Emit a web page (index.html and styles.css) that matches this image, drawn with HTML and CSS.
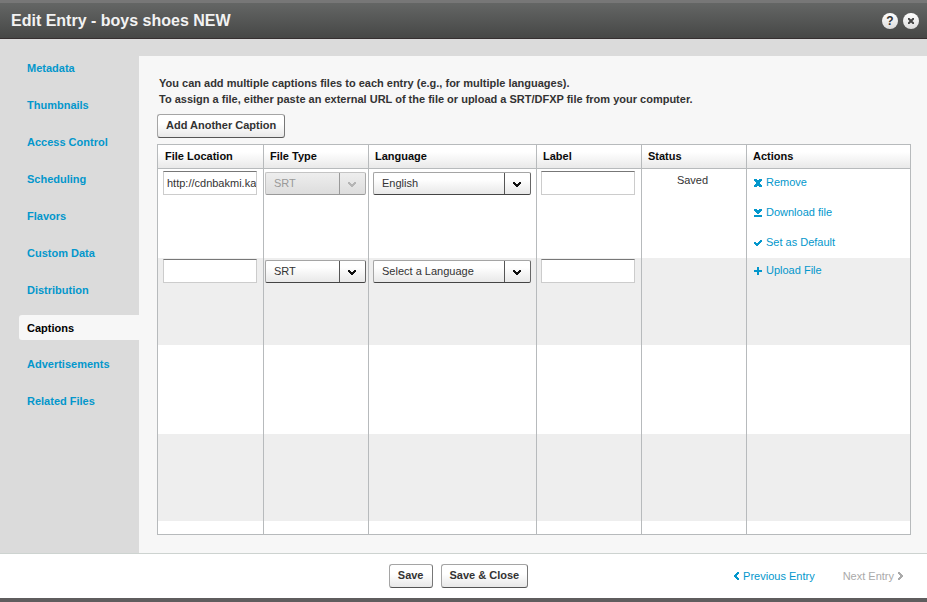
FILE: index.html
```html
<!DOCTYPE html>
<html lang="en">
<head>
<meta charset="utf-8">
<title>Edit Entry - boys shoes NEW</title>
<link rel="stylesheet" href="styles.css">
</head>
<body>
<svg class="defs" aria-hidden="true">
  <symbol id="chevron" viewBox="0 0 8 5"><path d="M0 0h2v1h1v1h2V1h1V0h2v2H7v1H6v1H5v1H3V4H2V3H1V2H0z"/></symbol>
  <symbol id="remove" viewBox="0 0 8 8"><path d="M0 0h3v1h2V0h3v2H7v1H6v2h1v1h1v2H5V7H3v1H0V6h1V5h1V3H1V2H0z"/></symbol>
  <symbol id="download" viewBox="0 0 8 8"><path d="M0 0h3v1h2V0h3v2H7v1H6v1H5v1H3V4H2V3H1V2H0zM0 6h8v2H0z"/></symbol>
  <symbol id="check" viewBox="0 0 8 8"><path d="M6 1h2v2H7v1H6v1H5v1H4v1H2V6H1V5H0V3h2v1h2V3h1V2h1z"/></symbol>
  <symbol id="plus" viewBox="0 0 8 8"><path d="M3 0h2v3h3v2H5v3H3V5H0V3h3z"/></symbol>
  <symbol id="left" viewBox="0 0 5 8"><path d="M3 0h2v2H4v1H3v2h1v1h1v2H3V7H2V6H1V5H0V3h1V2h1V1h1z"/></symbol>
  <symbol id="right" viewBox="0 0 5 8"><path d="M2 0H0v2h1v1h1v2H1v1H0v2h2V7h1V6h1V5h1V3H4V2H3V1H2z"/></symbol>
</svg>

<header class="titlebar">
  <h1>Edit Entry - boys shoes NEW</h1>
  <div class="window-tools">
    <button class="round" type="button" aria-label="Help">?</button>
    <button class="round" type="button" aria-label="Close"><svg width="6" height="6" viewBox="0 0 6 6"><path d="M0 0L6 6M6 0L0 6"/></svg></button>
  </div>
</header>

<div class="body">
  <nav class="sidebar">
    <a href="#">Metadata</a>
    <a href="#">Thumbnails</a>
    <a href="#">Access Control</a>
    <a href="#">Scheduling</a>
    <a href="#">Flavors</a>
    <a href="#">Custom Data</a>
    <a href="#">Distribution</a>
    <a href="#" class="active" aria-current="page">Captions</a>
    <a href="#">Advertisements</a>
    <a href="#">Related Files</a>
  </nav>

  <main>
    <p class="intro">You can add multiple captions files to each entry (e.g., for multiple languages).<br>To assign a file, either paste an external URL of the file or upload a SRT/DFXP file from your computer.</p>
    <button class="btn" type="button">Add Another Caption</button>

    <table>
      <colgroup><col class="c-location"><col class="c-type"><col class="c-language"><col class="c-label"><col class="c-status"><col></colgroup>
      <thead>
        <tr><th>File Location</th><th>File Type</th><th>Language</th><th>Label</th><th>Status</th><th>Actions</th></tr>
      </thead>
      <tbody>
        <tr>
          <td class="field"><input type="text" aria-label="File location" value="http://cdnbakmi.ka"></td>
          <td class="type"><span class="select"><select aria-label="File type" disabled><option>SRT</option></select><span class="arrow"><svg><use href="#chevron"/></svg></span></span></td>
          <td class="lang"><span class="select"><select aria-label="Language"><option>English</option></select><span class="arrow"><svg><use href="#chevron"/></svg></span></span></td>
          <td class="label"><input type="text" aria-label="Label"></td>
          <td class="status">Saved</td>
          <td class="actions">
            <a href="#"><svg><use href="#remove"/></svg>Remove</a>
            <a href="#"><svg><use href="#download"/></svg>Download file</a>
            <a href="#"><svg><use href="#check"/></svg>Set as Default</a>
          </td>
        </tr>
        <tr>
          <td class="field"><input type="text" aria-label="File location"></td>
          <td class="type"><span class="select"><select aria-label="File type"><option>SRT</option></select><span class="arrow"><svg><use href="#chevron"/></svg></span></span></td>
          <td class="lang"><span class="select"><select aria-label="Language"><option>Select a Language</option></select><span class="arrow"><svg><use href="#chevron"/></svg></span></span></td>
          <td class="label"><input type="text" aria-label="Label"></td>
          <td class="status"></td>
          <td class="actions"><a href="#"><svg><use href="#plus"/></svg>Upload File</a></td>
        </tr>
        <tr><td></td><td></td><td></td><td></td><td></td><td></td></tr>
        <tr><td></td><td></td><td></td><td></td><td></td><td></td></tr>
        <tr class="partial"><td></td><td></td><td></td><td></td><td></td><td></td></tr>
      </tbody>
    </table>
  </main>
</div>

<footer>
  <div class="buttons">
    <button class="btn" type="button">Save</button>
    <button class="btn" type="button">Save &amp; Close</button>
  </div>
  <div class="pager">
    <a href="#"><svg><use href="#left"/></svg>Previous Entry</a>
    <a class="off" aria-disabled="true">Next Entry<svg><use href="#right"/></svg></a>
  </div>
</footer>
</body>
</html>
```
FILE: styles.css
```css
* {
  box-sizing: border-box;
}

body {
  margin: 0;
  min-height: 100vh;
  display: flex;
  flex-direction: column;
  border-top: 3px solid #777;
  border-bottom: 4px solid #5f5d5e;
  background: #fff;
  color: #333;
  font: 11px/16px "Liberation Sans", Arial, sans-serif;
}

.defs {
  position: absolute;
  width: 0;
  height: 0;
}

a {
  color: #0397cc;
  text-decoration: none;
}

button,
input,
select {
  font: inherit;
  color: inherit;
}

svg {
  fill: currentColor;
}

.titlebar {
  display: flex;
  align-items: center;
  justify-content: space-between;
  height: 36px;
  padding: 0 8px 0 11px;
  border-bottom: 1px solid #352f30;
  background: linear-gradient(#646665, #464746);
}

h1 {
  margin: 0;
  color: #f2f2f2;
  font-size: 16px;
  line-height: 20px;
}

.window-tools {
  display: flex;
  gap: 5px;
}

.round {
  display: flex;
  align-items: center;
  justify-content: center;
  width: 16px;
  height: 16px;
  padding: 0;
  border: 0;
  border-radius: 50%;
  background: linear-gradient(#fff, #ddd);
  color: #333;
  font-size: 12px;
  font-weight: bold;
}

.round path {
  stroke: #444;
  stroke-width: 2;
}

.body {
  flex: 1;
  display: flex;
  padding-top: 17px;
  border-bottom: 1px solid #cdd3d0;
  background: #dbdbdb;
}

.sidebar {
  display: flex;
  flex-direction: column;
  gap: 12px;
  width: 139px;
  flex: none;
  padding-left: 19px;
  font-weight: bold;
}

.sidebar a {
  padding: 4px 8px 5px;
  border-radius: 3px 0 0 3px;
}

.sidebar .active {
  padding: 5px 8px 4px;
  background: #f7f7f7;
  color: #000;
}

main {
  flex: 1;
  min-width: 0;
  padding: 19px 16px 18px 18px;
  background: #f7f7f7;
}

.intro {
  margin: 0 2px 7px;
  font-weight: bold;
}

.btn {
  display: block;
  height: 24px;
  padding: 0 8px 2px;
  border: 1px solid #a5a5a5;
  border-right-color: #777;
  border-bottom-color: #555;
  border-radius: 3px;
  background: linear-gradient(#fff 40%, #e8e8e8);
  font-weight: bold;
}

table {
  width: 100%;
  margin-top: 6px;
  table-layout: fixed;
  border-collapse: separate;
  border-spacing: 0;
  border: 1px solid #b7babc;
  background: #fff;
}

.c-location {
  width: 106px;
}

.c-type,
.c-label,
.c-status {
  width: 105px;
}

.c-language {
  width: 168px;
}

th {
  height: 24px;
  padding: 0 6px 1px;
  border-right: 1px solid #b7babc;
  border-bottom: 1px solid #b7babc;
  background: linear-gradient(#fff 30%, #e9e9e9);
  color: #0b0b0b;
  line-height: 14px;
  text-align: left;
}

th:first-child {
  padding-left: 7px;
}

td {
  height: 89px;
  padding: 2px 6px 0;
  border-right: 1px solid #b7babc;
  vertical-align: top;
}

th:last-child,
td:last-child {
  border-right: 0;
}

tr:nth-child(even) td {
  height: 87px;
  padding-top: 1px;
  background: #eee;
}

.partial td {
  height: 13px;
}

td.field {
  padding-left: 5px;
}

td.type {
  padding-left: 1px;
  padding-right: 2px;
}

td.lang {
  padding-left: 4px;
  padding-right: 5px;
}

td.label {
  padding-left: 4px;
}

input {
  display: block;
  width: 100%;
  height: 24px;
  padding: 0 0 0 3px;
  border: 1px solid #ccc;
  border-top-color: #777;
  background: #fff;
}

.select {
  display: grid;
  grid-template-columns: 1fr 27px;
  height: 23px;
  margin-top: 1px;
}

.select select {
  grid-area: 1 / 1 / 2 / 3;
  appearance: none;
  min-width: 0;
  padding: 0 30px 2px 8px;
  border: 1px solid #a5a5a5;
  border-right-color: #666;
  border-bottom-color: #444;
  border-radius: 2px;
  background: linear-gradient(#fff 30%, #e8e8e8);
}

.arrow {
  grid-area: 1 / 2;
  display: flex;
  align-items: center;
  justify-content: center;
  margin: 1px 1px 1px 0;
  padding: 2px 1px 0 0;
  border-left: 1px solid #555;
  color: #111;
  pointer-events: none;
}

.arrow svg {
  width: 8px;
  height: 5px;
}

.select select:disabled {
  border-color: #c4c4c4 #aaa #999 #c4c4c4;
  background: linear-gradient(#eee, #ddd);
  color: #999;
  opacity: 1;
}

select:disabled + .arrow {
  border-color: #999;
  color: #b5b5b5;
}

td.status {
  padding: 3px 8px 0 5px;
  text-align: center;
}

.actions a {
  display: flex;
  align-items: center;
  gap: 4px;
  height: 22px;
  margin-bottom: 8px;
}

.actions a:last-child {
  margin-bottom: 0;
}

.actions svg {
  width: 8px;
  height: 8px;
  margin: 2px 0 0 1px;
}

footer {
  display: grid;
  grid-template-columns: 1fr auto 1fr;
  align-items: center;
  height: 44px;
  padding: 0 24px 0 14px;
}

.buttons {
  grid-column: 2;
  display: flex;
  gap: 8px;
}

.pager {
  display: flex;
  justify-content: flex-end;
  gap: 28px;
}

.pager a {
  display: flex;
  align-items: center;
  gap: 4px;
}

.pager svg {
  width: 5px;
  height: 8px;
}

.pager .off {
  color: #aaa;
}
```
